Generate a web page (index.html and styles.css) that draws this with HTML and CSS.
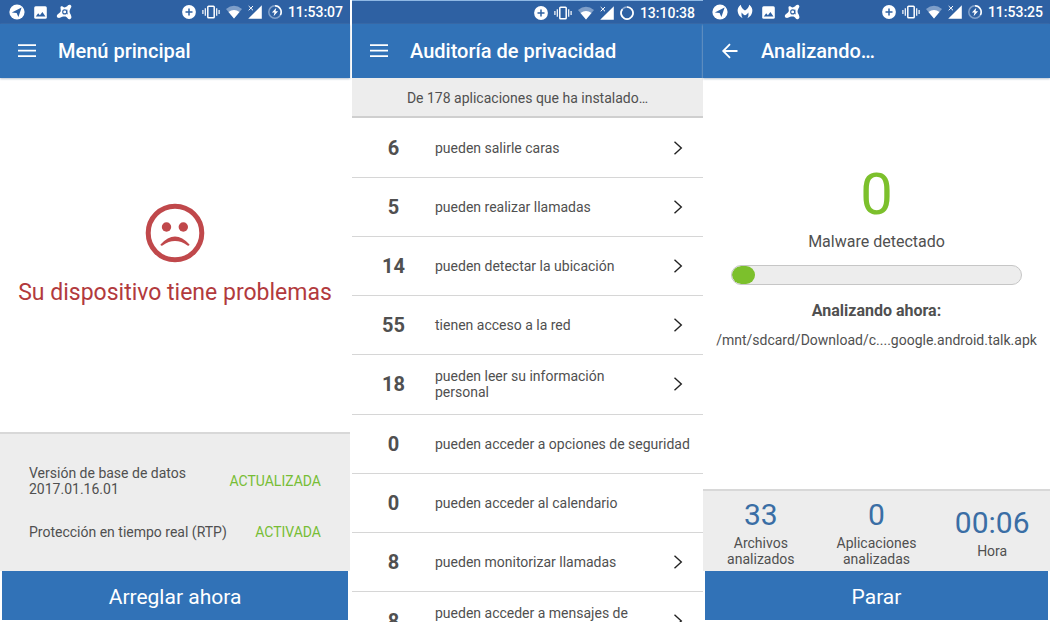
FILE: index.html
```html
<!DOCTYPE html>
<html lang="es">
<head>
<meta charset="utf-8">
<meta name="viewport" content="width=device-width, initial-scale=1">
<title>Seguridad móvil</title>
<link rel="stylesheet" href="styles.css">
</head>
<body>
<svg class="sprite" aria-hidden="true">
  <symbol id="telegram" viewBox="0 0 16 16"><circle cx="8" cy="8" r="7.6" fill="#fff"/><path d="M2.800 8.400 12.600 3.600 9.400 13 7.600 9.100Z" fill="#2e61a3"/></symbol>
  <symbol id="image" viewBox="0 0 13 13"><rect x=".2" y=".2" width="12.6" height="12.6" rx="1.5" fill="#fff"/><path d="M1.8 10.5 4.2 7.3 5.9 9.3 8.4 6 11.5 10.5Z" fill="#2e61a3"/></symbol>
  <symbol id="avast" viewBox="0 0 16 16"><path d="M4.8 2.6C5.8 1.6 7 2.6 8.1 3.4 9.7 3.3 11 2.7 12 1.3 13.3-.1 15.8.9 15.3 2.9 14.2 4.9 13.4 6.2 13.6 8.1 13.8 9.7 15.6 11.4 15.4 13.4 14.9 15.5 12.5 15.8 11.6 14.2 10.7 12.6 9.4 12.3 7.3 12.6 5.5 12.8 3.8 14.4 2 13.8.4 13 .5 11 1.8 10.2 3.7 9 4.6 8.2 4.8 6.8 4.9 5.4 4 3.8 4.8 2.6Z" fill="#fff"/><circle cx="8.7" cy="7.9" r="2" fill="none" stroke="#2e61a3" stroke-width="1.1"/><path d="M10.9 5.6V9.2Q11 10 11.8 9.9" fill="none" stroke="#2e61a3" stroke-width="1"/></symbol>
  <symbol id="malware" viewBox="0 0 16 16"><path d="M3.8.7C4.2 3.4 6 5.5 8 6.4 10 5.5 11.8 3.4 12.2.7 14.6 2.5 15.9 5.3 15.2 8.1 14.7 11 13 12.9 10.4 14.2 11.6 12 11.7 10.2 11.3 8.4 10.4 9.9 9.2 10.8 8 11.2 6.8 10.8 5.6 9.9 4.7 8.4 4.3 10.2 4.4 12 5.6 14.2 3 12.9 1.3 11 .8 8.1.1 5.3 1.4 2.5 3.8.7Z" fill="#fff"/></symbol>
  <symbol id="plus" viewBox="0 0 14 14"><circle cx="7" cy="7" r="6.9" fill="#fff"/><path d="M7 3.5V10.5M3.5 7H10.5" stroke="#2e61a3" stroke-width="1.5"/></symbol>
  <symbol id="vibrate" viewBox="0 0 18 14"><rect x="5.8" y="1.3" width="6.4" height="11.4" rx=".8" fill="none" stroke="#fff" stroke-width="1.5"/><path d="M3.3 3.2V10.8M14.7 3.2V10.8" stroke="#fff" stroke-width="1.2"/><path d="M.9 5V9M17.1 5V9" stroke="#fff" stroke-width="1.2"/></symbol>
  <symbol id="wifi" viewBox="0 0 16 14"><path d="M0 3.9Q8-2.3 16 3.9L8 13.6Z" fill="#7f9fc9"/><path d="M2.5 6.9Q8 3 13.5 6.9L8 13.6Z" fill="#fff"/></symbol>
  <symbol id="signal" viewBox="0 0 14 14"><path d="M13.8.2V13.8H.2L6 8 7 6.9Z" fill="#fff"/><path d="M.7 1 5 5.3M5 1 .7 5.3" stroke="#fff" stroke-width="1"/></symbol>
  <symbol id="charging" viewBox="0 0 14 14"><circle cx="7" cy="7" r="6.2" fill="none" stroke="#7f9fc9" stroke-width="1.5"/><path d="M7 .8A6.2 6.2 0 0 1 12.4 10" fill="none" stroke="#fff" stroke-width="1.5"/><path d="M8.3 2.8 3.9 7.6H6.5L5.6 11.3 10.1 6.3H7.5Z" fill="#fff"/></symbol>
  <symbol id="battery" viewBox="0 0 14 14"><circle cx="7" cy="7" r="6" fill="none" stroke="#8faad0" stroke-width="1.7"/><path d="M7 1A6 6 0 1 1 2.4 3.2" fill="none" stroke="#fff" stroke-width="1.7"/></symbol>
  <symbol id="menu" viewBox="0 0 18 14"><path d="M0 1.2H18M0 6.7H18M0 12.2H18" stroke="#fff" stroke-width="1.8"/></symbol>
  <symbol id="back" viewBox="0 0 18 16"><path d="M16.500 8H2.500M9 1.200 2.200 8 9 14.800" fill="none" stroke="#fff" stroke-width="1.800"/></symbol>
  <symbol id="chevron" viewBox="0 0 10 14"><path d="M1.5.8 8.3 7 1.5 13.2" fill="none" stroke="#222" stroke-width="1.4"/></symbol>
</svg>
<main class="screens">
  <section class="screen">
    <div class="status">
      <svg class="i16"><use href="#telegram"/></svg><svg class="i13"><use href="#image"/></svg><svg class="i16"><use href="#avast"/></svg>
      <div class="system"><svg class="i14"><use href="#plus"/></svg><svg class="i18"><use href="#vibrate"/></svg><svg class="iwifi"><use href="#wifi"/></svg><svg class="i14"><use href="#signal"/></svg><svg class="i14"><use href="#charging"/></svg><time>11:53:07</time></div>
    </div>
    <header class="appbar"><button class="nav" aria-label="Menú"><svg class="menu"><use href="#menu"/></svg></button><h1>Menú principal</h1></header>
    <div class="alert">
      <svg class="face" viewBox="0 0 60 60" aria-hidden="true"><circle cx="30" cy="30" r="26.8" fill="none" stroke="#c0484b" stroke-width="5"/><circle cx="21.500" cy="24" r="4.700" fill="#c0484b"/><circle cx="38.300" cy="24" r="4.700" fill="#c0484b"/><path d="M15.500 41.500Q30 25.500 44.500 41.500C44.600 42.600 43.500 43 42.500 42.400Q30 33.500 17.500 42.400C16.500 43 15.400 42.600 15.500 41.500Z" fill="#c0484b"/></svg>
      <p>Su dispositivo tiene problemas</p>
    </div>
    <dl class="facts">
      <div><dt>Versión de base de datos<br>2017.01.16.01</dt><dd>ACTUALIZADA</dd></div>
      <div><dt>Protección en tiempo real (RTP)</dt><dd>ACTIVADA</dd></div>
    </dl>
    <button class="action">Arreglar ahora</button>
  </section>

  <section class="screen audit">
    <div class="status">
      <div class="system"><svg class="i14"><use href="#plus"/></svg><svg class="i18"><use href="#vibrate"/></svg><svg class="iwifi"><use href="#wifi"/></svg><svg class="i14"><use href="#signal"/></svg><svg class="i14"><use href="#battery"/></svg><time>13:10:38</time></div>
    </div>
    <header class="appbar"><button class="nav" aria-label="Menú"><svg class="menu"><use href="#menu"/></svg></button><h1>Auditoría de privacidad</h1></header>
    <p class="summary">De 178 aplicaciones que ha instalado…</p>
    <ul class="list">
      <li><b>6</b><span>pueden salirle caras</span><svg class="chevron"><use href="#chevron"/></svg></li>
      <li><b>5</b><span>pueden realizar llamadas</span><svg class="chevron"><use href="#chevron"/></svg></li>
      <li><b>14</b><span>pueden detectar la ubicación</span><svg class="chevron"><use href="#chevron"/></svg></li>
      <li><b>55</b><span>tienen acceso a la red</span><svg class="chevron"><use href="#chevron"/></svg></li>
      <li><b>18</b><span>pueden leer su información<br>personal</span><svg class="chevron"><use href="#chevron"/></svg></li>
      <li><b>0</b><span>pueden acceder a opciones de seguridad</span></li>
      <li><b>0</b><span>pueden acceder al calendario</span></li>
      <li><b>8</b><span>pueden monitorizar llamadas</span><svg class="chevron"><use href="#chevron"/></svg></li>
      <li><b>8</b><span>pueden acceder a mensajes de<br>texto</span><svg class="chevron"><use href="#chevron"/></svg></li>
    </ul>
  </section>

  <section class="screen scan">
    <div class="status">
      <svg class="i16"><use href="#telegram"/></svg><svg class="i16"><use href="#malware"/></svg><svg class="i13"><use href="#image"/></svg><svg class="i16"><use href="#avast"/></svg>
      <div class="system"><svg class="i14"><use href="#plus"/></svg><svg class="i18"><use href="#vibrate"/></svg><svg class="iwifi"><use href="#wifi"/></svg><svg class="i14"><use href="#signal"/></svg><svg class="i14"><use href="#charging"/></svg><time>11:53:25</time></div>
    </div>
    <header class="appbar"><button class="nav" aria-label="Atrás"><svg class="back"><use href="#back"/></svg></button><h1>Analizando…</h1></header>
    <div class="result">
      <p class="detected">0</p>
      <p class="caption">Malware detectado</p>
      <div class="track" role="progressbar" aria-label="Progreso del análisis" aria-valuenow="8" aria-valuemin="0" aria-valuemax="100"><div class="fill" style="width: 8%"></div></div>
      <p class="now">Analizando ahora:</p>
      <p class="path">/mnt/sdcard/Download/c....google.android.talk.apk</p>
    </div>
    <div class="totals">
      <div><strong>33</strong><span>Archivos<br>analizados</span></div>
      <div><strong>0</strong><span>Aplicaciones<br>analizadas</span></div>
      <div><strong>00:06</strong><span>Hora</span></div>
    </div>
    <button class="action">Parar</button>
  </section>
</main>
</body>
</html>
```

FILE: styles.css
```css
* { box-sizing: border-box; }
body, h1, p, dl, dd, ul { margin: 0; padding: 0; }
body { background: #fff; color: #505050; font: 14px/16px Roboto, sans-serif; }
button { border: 0; padding: 0; font: inherit; color: #fff; cursor: pointer; }
svg { display: block; flex: none; }
.sprite { position: absolute; width: 0; height: 0; }

.screens { display: grid; grid-template-columns: 350fr 353fr 347fr; height: 100vh; overflow: hidden; }
.screen { display: flex; flex-direction: column; min-width: 0; min-height: 0; }
.audit { margin-left: 2px; border-top: 1px solid #8fb8e4; overflow: hidden; }

.status { display: flex; flex: none; align-items: center; gap: 9px; height: 24px; padding: 0 7px 0 9px; background: #2e61a3; }
.audit .status { height: 23px; padding-right: 8px; }
.system { display: flex; align-items: center; gap: 6px; margin-left: auto; color: #fff; font-weight: 500; }
.i13 { width: 13px; height: 13px; }
.i14 { width: 14px; height: 14px; }
.i16 { width: 16px; height: 16px; }
.i18 { width: 18px; height: 14px; }
.iwifi { width: 16px; height: 14px; }

.appbar { display: flex; flex: none; align-items: center; gap: 22px; height: 54px; padding-left: 18px; background: #3172b7; box-shadow: 0 1px 2px #b9c3d0; color: #fff; }
.appbar h1 { font-size: 20px; line-height: 24px; font-weight: 500; }
.nav { background: none; }
.menu { width: 18px; height: 14px; }
.back { width: 18px; height: 16px; }

.alert { display: flex; flex: 1; flex-direction: column; align-items: center; justify-content: center; gap: 16px; color: #b23a3d; font-size: 23px; line-height: 28px; }
.face { width: 60px; height: 60px; }

.facts { display: grid; gap: 27px; padding: 31px 29px; border-top: 2px solid #d8d8d8; background: #ededed; }
.facts div { display: flex; align-items: center; justify-content: space-between; }
.facts dd { color: #77bd35; }
.action { flex: none; height: 49px; margin: 0 2px 2px; padding-top: 2px; background: #3172b7; font-size: 21px; line-height: 26px; }

.summary { flex: none; margin-bottom: 1px; padding: 12px 0 10px; border-bottom: 2px solid #cfcfcf; background: #ededed; text-align: center; }
.list { list-style: none; }
.list li { display: grid; grid-template-columns: 83px 1fr 30px; align-items: center; min-height: 59px; padding: 13px 0 14px; border-bottom: 1px solid #d6d6d6; }
.list li:not(:has(svg)) { grid-template-columns: 83px 1fr; }
.list b { font-size: 20px; line-height: 24px; text-align: center; }
.chevron { width: 10px; height: 14px; }

.result { display: flex; flex: 1; flex-direction: column; align-items: center; padding: 80px 16px 0; }
.detected { color: #7cc02c; font-size: 58px; line-height: 72px; }
.caption { padding-top: 2px; font-size: 16px; line-height: 20px; }
.track { align-self: stretch; height: 20px; margin: 13px 12px 16px; border: 1px solid #c6c6c6; border-radius: 10px; background: #ededed; overflow: hidden; }
.fill { height: 100%; border-radius: 10px; background: #7cc02c; }
.now { font-size: 16px; line-height: 20px; font-weight: 700; }
.path { padding-top: 11px; }
.totals { display: grid; grid-template-columns: repeat(3, 1fr); align-items: center; height: 82px; border-top: 2px solid #d8d8d8; background: #ededed; text-align: center; }
.totals strong { display: block; color: #3a6ea5; font-size: 30px; line-height: 40px; font-weight: 400; }
```
